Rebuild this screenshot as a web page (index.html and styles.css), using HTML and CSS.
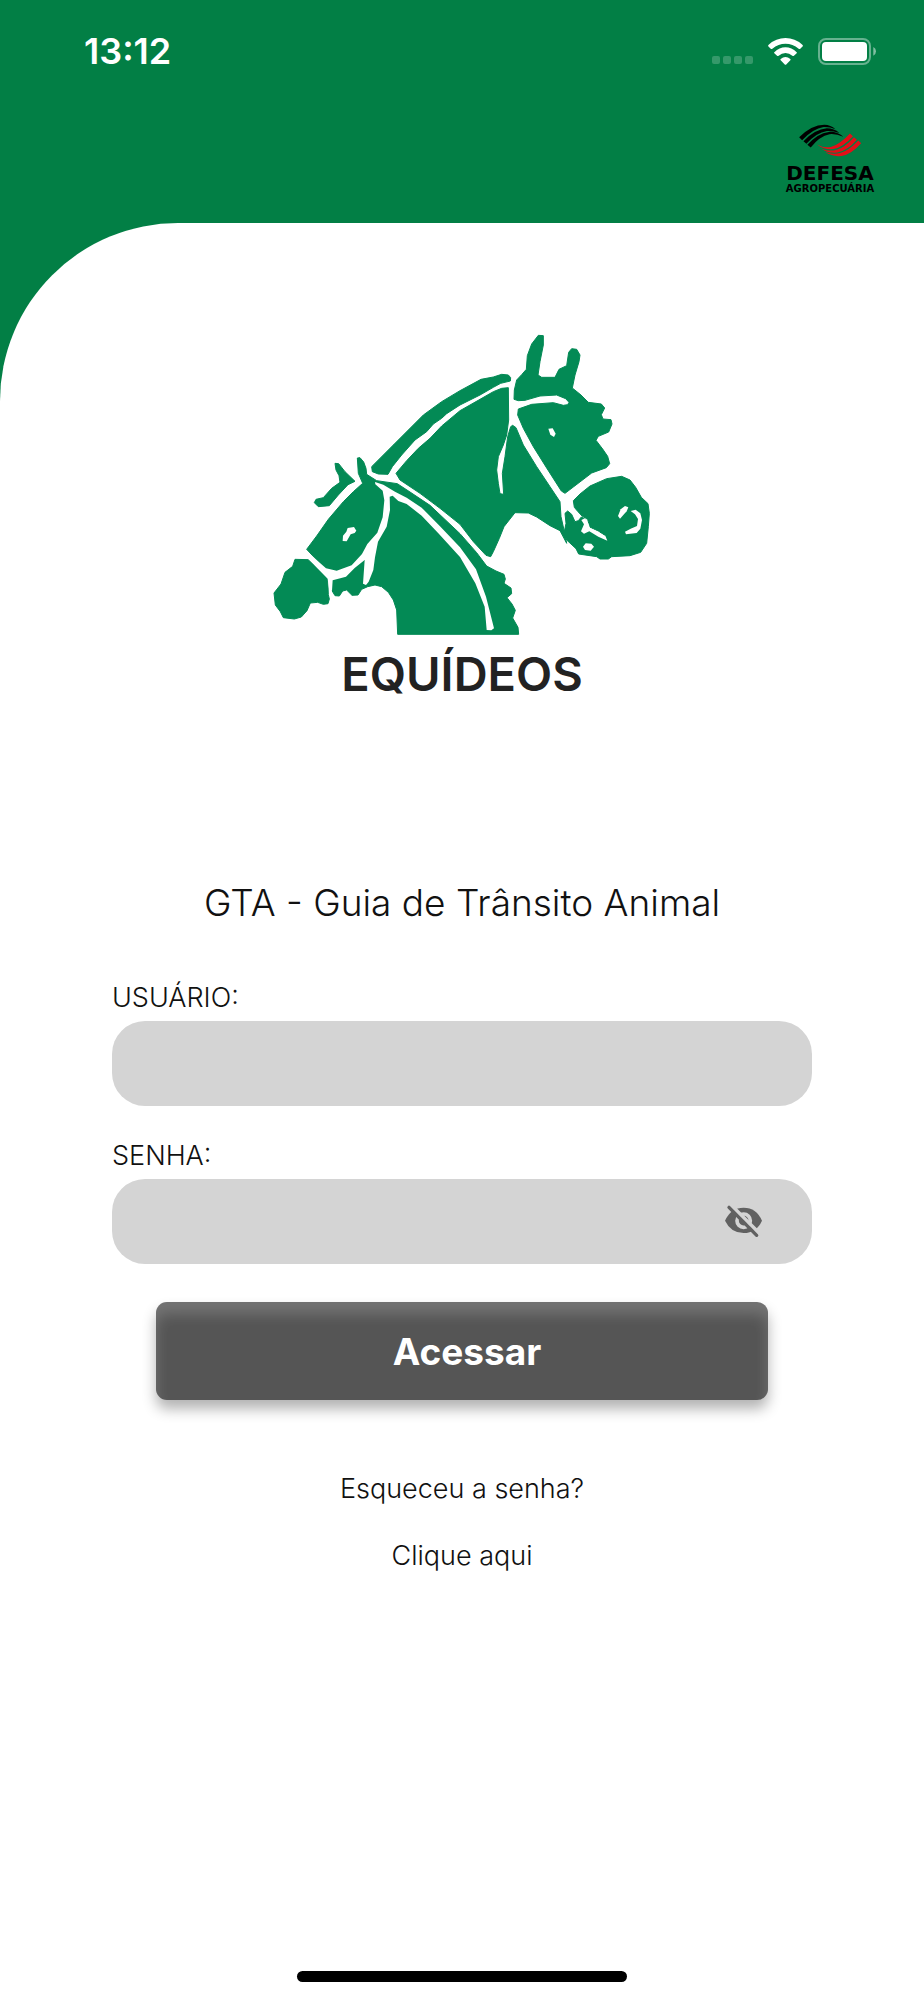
FILE: index.html
```html
<!DOCTYPE html>
<html lang="pt-BR">
<head>
  <meta charset="UTF-8">
  <meta name="viewport" content="width=device-width, initial-scale=1.0">
  <title>Equídeos</title>
  <link rel="stylesheet" href="styles.css">
</head>
<body>
  <header class="header">
    <div class="status-bar">
      <span class="time">13:12</span>
      <div class="status-icons">
        <svg class="signal" viewBox="0 0 41 8" aria-hidden="true">
          <rect x="0" y="0" width="8" height="8" rx="2"/>
          <rect x="11" y="0" width="8" height="8" rx="2"/>
          <rect x="22" y="0" width="8" height="8" rx="2"/>
          <rect x="33" y="0" width="8" height="8" rx="2"/>
        </svg>
        <svg class="wifi" viewBox="0 0 105 81" aria-hidden="true">
          <path d="M0 24 Q0 22 2 20 Q24 0 52.500 0 Q81 0 103 20 Q105 22 105 24 L96 33 Q94 34 92 32 Q74 17 52.500 17 Q31 17 13 32 Q11 34 9 33 Z"/>
          <path d="M19 43 Q34 28 52.500 28 Q71 28 86 43 Q88 44 86 46 L77 54 Q75 55 73 53 Q64 45 52.500 45 Q41 45 32 53 Q30 55 28 54 L19 46 Q17 44 19 43 Z"/>
          <path d="M38 63 Q45 57 52.500 57 Q60 57 67 63 Q69 65 67 67 L54 80 Q52 81 51 80 L38 67 Q36 65 38 63 Z"/>
        </svg>
        <svg class="battery" viewBox="0 0 174 81" aria-hidden="true">
          <rect class="battery-case" x="3" y="3" width="153" height="75" rx="21"/>
          <rect x="12" y="12" width="135" height="57" rx="12"/>
          <path class="battery-tip" d="M166 27 Q174 31 174 40 Q174 49 166 53 Z"/>
        </svg>
      </div>
    </div>
    <div class="brand">
      <svg class="brand-mark" viewBox="328 312 190 100" aria-hidden="true">
        <g fill="#000">
          <path d="M328 352 Q366 314 404 314 Q424 314 438 328 Q420 320 402 321 Q370 326 337 361 Z"/>
          <path d="M341 364 Q376 328 412 325 Q434 325 450 339 Q430 332 412 333 Q380 338 350 372 Z"/>
          <path d="M353 375 Q384 340 418 336 Q442 334 462 351 Q440 341 420 343 Q390 349 363 383 Z"/>
        </g>
        <g fill="#e30f17">
          <path d="M382 374 Q400 385 424 382 Q452 374 482 341 L491 349 Q462 382 432 388 Q404 391 382 374 Z"/>
          <path d="M394 386 Q416 396 440 391 Q466 384 494 352 L503 360 Q474 394 444 398 Q416 402 394 386 Z"/>
          <path d="M407 397 Q430 406 452 400 Q480 392 507 362 L516 370 Q486 404 456 409 Q428 412 407 397 Z"/>
        </g>
      </svg>
      <span class="brand-name">DEFESA</span>
      <span class="brand-sub">AGROPECUÁRIA</span>
    </div>
  </header>

  <main class="content">
    <svg class="horses" viewBox="30 30 1152 915" role="img" aria-label="Equídeos">
      <!-- back horse: mane, neck, head and muzzle -->
      <g class="coat">
        <path d="M335 440 L400 375 L490 285 L545 245 L600 212 L663 178 L700 171 L725 163 L745 165 L752 173 L751 183 L722 190 L700 202 L660 225 L600 255 L560 281 L545 295 L520 312 L500 335 L465 360 L425 405 L397 440 L384 463 L355 462 L337 455 Z"/>
        <path d="M408 460 L440 422 L475 385 L510 355 L545 318 L600 272 L660 238 L700 215 L725 205 L745 203 L746 300 L740 345 L730 375 L715 410 L710 450 L715 490 L720 521 L731 523 L727 460 L735 410 L743 350 L752 320 L758 316 L768 323 L790 375 L830 440 L870 500 L900 545 L903 590 L912 630 L920 670 L900 632 L870 617 L830 591 L805 579 L765 578 L732 620 L718 655 L700 695 L692 710 L678 706 L640 665 L600 613 L540 565 L480 520 L420 480 Z"/>
        <path d="M762 238 L763 210 L770 180 L785 164 L799 148 L802 107 L815 72 L835 46 L850 47 L850 75 L840 125 L834 165 L845 172 L885 172 L897 148 L920 137 L926 97 L935 86 L950 88 L960 105 L957 125 L945 165 L937 204 L963 225 L985 247 L1024 252 L1034 264 L1024 284 L1029 297 L1053 299 L1056 312 L1046 336 L1015 349 L1008 361 L1028 387 L1043 409 L1049 431 L1039 443 L995 459 L940 501 L915 520 L904 513 L860 444 L820 380 L790 325 L773 285 L775 267 L815 253 L880 248 L910 256 L923 254 L927 247 L917 236 L890 225 L840 228 L795 241 L775 242 Z"/>
        <path d="M940 542 L960 522 L990 498 L1040 476 L1085 469 L1110 480 L1127 502 L1144 532 L1164 551 L1168 580 L1165 620 L1160 670 L1142 697 L1110 707 L1055 710 L1045 717 L1020 717 L1010 710 L956 702 L948 686 L920 660 L912 640 L918 610 L915 580 L923 573 L935 583 L945 605 L955 602 L964 591 L975 597 L974 613 L965 634 L971 641 L985 629 L1015 644 L1041 661 L1037 648 L1015 633 L989 621 L983 598 L967 589 L953 574 L943 562 Z"/>
      </g>
      <g class="gap">
        <path d="M865 326 L878 325 L887 341 L882 351 L871 344 Z"/>
        <path d="M969 680 L977 670 L994 671 L1002 680 L992 692 L975 690 Z"/>
        <path d="M964 600 L975 595 L985 610 L990 624 L1015 636 L1036 648 L1042 662 L1015 650 L988 634 L972 641 L963 634 L972 613 Z"/>
        <path d="M1074 588 L1082 568 L1095 558 L1105 562 L1100 574 L1080 596 Z"/>
        <path d="M1112 573 L1127 569 L1141 580 L1146 600 L1141 626 L1130 639 L1098 643 L1095 635 L1112 626 L1131 618 L1134 597 L1125 583 Z"/>
      </g>
      <!-- front horse -->
      <g class="coat">
        <path d="M225 430 L236 431 L255 455 L285 484 L264 494 L235 525 L208 557 L175 560 L163 548 L168 538 L190 533 L215 505 L240 487 L237 467 L228 450 Z"/>
        <path d="M292 414 L300 413 L311 426 L318 445 L320 463 L350 482 L412 491 L450 516 L510 556 L600 641 L650 698 L680 738 L708 753 L732 763 L736 777 L732 790 L753 804 L755 821 L741 833 L756 852 L766 871 L758 894 L774 922 L776 943 L413 943 L410 870 L400 840 L385 817 L365 800 L345 795 L323 800 L305 808 L294 825 L276 826 L260 810 L248 813 L238 828 L225 827 L216 812 L214 755 L195 747 L140 688 L170 648 L205 598 L250 545 L280 515 L308 490 L295 460 Z"/>
        <path d="M105 718 L145 719 L175 747 L203 776 L205 824 L208 837 L204 851 L190 853 L173 847 L151 849 L141 872 L124 891 L103 897 L70 893 L61 875 L46 855 L42 819 L63 792 L75 757 L98 739 Z"/>
      </g>
      <g class="gap">
        <path d="M345 486 L370 494 L405 515 L440 533 L485 563 L540 619 L600 682 L648 748 L678 830 L702 925 L694 931 L680 930 L674 860 L646 790 L600 711 L535 640 L485 587 L440 552 L415 543 L398 527 L389 530 L390 570 L380 620 L354 665 L345 712 L340 750 L326 785 L318 795 L309 791 L314 720 L284 744 L258 770 L218 781 L216 812 L208 812 L203 776 L140 712 L150 703 L198 745 L230 752 L275 736 L306 702 L322 672 L352 638 L368 592 L373 541 L368 512 L346 493 Z"/>
        <path d="M248 663 L249 647 L259 635 L263 624 L282 621 L289 632 L284 639 L272 643 L260 664 Z"/>
      </g>
    </svg>
    <h1 class="title">EQUÍDEOS</h1>
    <p class="subtitle">GTA - Guia de Trânsito Animal</p>

    <form class="login">
      <label for="usuario">USUÁRIO:</label>
      <input class="field" type="text" id="usuario">

      <label for="senha">SENHA:</label>
      <div class="password">
        <input class="field" type="password" id="senha">
        <button class="toggle" type="button" aria-label="Mostrar senha">
          <svg viewBox="131 133 117 102" aria-hidden="true">
            <path fill="#616161" d="M134 183 Q152 144 190 144 Q228 144 245 183 Q228 220 190 220 Q152 220 134 183 Z"/>
            <circle cx="190" cy="183" r="20" fill="#616161" stroke="#d4d4d4" stroke-width="11"/>
            <path stroke="#d4d4d4" stroke-width="11" d="M148 132 L242 226"/>
            <path stroke="#616161" stroke-width="10" stroke-linecap="round" d="M146 143 L229 227"/>
          </svg>
        </button>
      </div>

      <button class="submit" type="submit">Acessar</button>
    </form>

    <div class="forgot">
      <p>Esqueceu a senha?</p>
      <a href="#recuperar">Clique aqui</a>
    </div>

    <div class="home-indicator"></div>
  </main>
</body>
</html>
```
FILE: styles.css
```css
* {
  box-sizing: border-box;
}

body {
  margin: 0;
  min-height: 100vh;
  display: flex;
  flex-direction: column;
  background-color: #027f45;
  color: #111;
  font-family: Inter, "Liberation Sans", sans-serif;
  font-size: 27px;
  font-weight: 300;
}

.header {
  padding: 28px 48px 0 84px;
  height: 223px;
}

.status-bar {
  display: flex;
  justify-content: space-between;
  align-items: center;
  height: 46px;
}

.time {
  color: #fff;
  font-size: 36px;
  font-weight: 600;
}

.status-icons {
  display: flex;
  align-items: center;
  gap: 15px;
  fill: #fff;
}

.signal {
  width: 41px;
  height: 8px;
  margin-top: 18px;
  opacity: 0.2;
}

.wifi {
  width: 35px;
  height: 27px;
}

.battery {
  width: 58px;
  height: 27px;
}

.battery-case {
  fill: none;
  stroke: #fff;
  stroke-width: 6;
  opacity: 0.4;
}

.battery-tip {
  opacity: 0.5;
}

.brand {
  display: flex;
  flex-direction: column;
  align-items: center;
  width: 88px;
  margin: 50px 2px 0 auto;
  color: #000;
  font-family: "DejaVu Sans", sans-serif;
  font-weight: 700;
}

.brand-mark {
  width: 63px;
  height: 33px;
}

.brand-name {
  margin-top: 5px;
  font-size: 20px;
  line-height: 22px;
}

.brand-sub {
  font-size: 10px;
  line-height: 10px;
}

.content {
  flex: 1;
  display: flex;
  flex-direction: column;
  align-items: center;
  padding: 107px 112px 18px;
  background-color: #fff;
  border-top-left-radius: 178px;
}

.horses {
  width: 384px;
  height: 305px;
}

.coat {
  fill: #038a55;
  stroke: #038a55;
  stroke-width: 3;
  stroke-linejoin: round;
}

.gap {
  fill: #fff;
}

.title {
  margin: 11px 0 0;
  color: #222;
  font-size: 47px;
  line-height: 56px;
  font-weight: 600;
}

.subtitle {
  margin: 179px 0 0;
  font-size: 37px;
  line-height: 44px;
}

.login {
  display: flex;
  flex-direction: column;
  width: 100%;
  margin-top: 54px;
}

.login label {
  height: 42px;
  line-height: 38px;
}

.field {
  width: 100%;
  height: 85px;
  margin-bottom: 31px;
  padding: 0 32px;
  border: none;
  border-radius: 33px;
  background-color: #d4d4d4;
  font: inherit;
}

.password {
  position: relative;
}

.password .field {
  margin-bottom: 38px;
  padding-right: 100px;
}

/* sits over the right end of the password field */
.toggle {
  position: absolute;
  top: 0;
  right: 49px;
  display: flex;
  align-items: center;
  height: 84px;
  padding: 0;
  border: none;
  background: none;
  cursor: pointer;
}

.toggle svg {
  width: 39px;
  height: 34px;
}

.submit {
  height: 98px;
  margin: 0 44px;
  padding: 0 0 0 10px;
  border: none;
  border-radius: 11px;
  background-color: #555;
  box-shadow: 0 9px 14px rgba(0, 0, 0, 0.3), inset 0 12px 14px rgba(255, 255, 255, 0.18);
  color: #fff;
  font-family: inherit;
  font-size: 37px;
  font-weight: 700;
  cursor: pointer;
}

.forgot {
  display: flex;
  flex-direction: column;
  align-items: center;
  gap: 31px;
  margin-top: 71px;
  line-height: 36px;
}

.forgot p {
  margin: 0;
}

.forgot a {
  color: inherit;
  text-decoration: none;
}

.home-indicator {
  width: 330px;
  height: 11px;
  margin-top: auto;
  border-radius: 6px;
  background-color: #000;
}
```
